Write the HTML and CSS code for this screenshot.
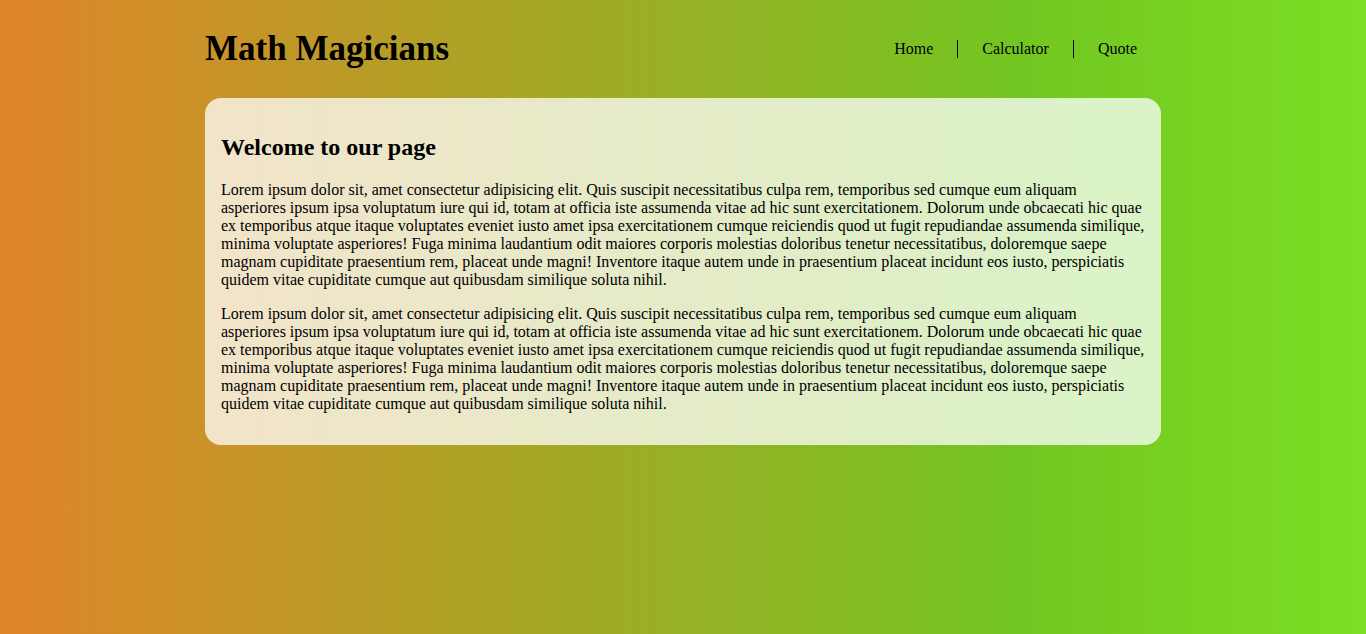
FILE: index.html
```html
<!DOCTYPE html>
<html lang="en">
<head>
<meta charset="utf-8">
<title>Math Magicians</title>
<link rel="stylesheet" href="styles.css">
</head>
<body>
<div class="page">
  <header class="header">
    <h1 class="logo">Math Magicians</h1>
    <nav class="nav">
      <a class="nav-link" href="#">Home</a>
      <a class="nav-link sep" href="#">Calculator</a>
      <a class="nav-link sep" href="#">Quote</a>
    </nav>
  </header>
  <main class="card">
    <h2 class="card-title">Welcome to our page</h2>
    <p class="card-text">Lorem ipsum dolor sit, amet consectetur adipisicing elit. Quis suscipit necessitatibus culpa rem, temporibus sed cumque eum aliquam asperiores ipsum ipsa voluptatum iure qui id, totam at officia iste assumenda vitae ad hic sunt exercitationem. Dolorum unde obcaecati hic quae ex temporibus atque itaque voluptates eveniet iusto amet ipsa exercitationem cumque reiciendis quod ut fugit repudiandae assumenda similique, minima voluptate asperiores! Fuga minima laudantium odit maiores corporis molestias doloribus tenetur necessitatibus, doloremque saepe magnam cupiditate praesentium rem, placeat unde magni! Inventore itaque autem unde in praesentium placeat incidunt eos iusto, perspiciatis quidem vitae cupiditate cumque aut quibusdam similique soluta nihil.</p>
    <p class="card-text">Lorem ipsum dolor sit, amet consectetur adipisicing elit. Quis suscipit necessitatibus culpa rem, temporibus sed cumque eum aliquam asperiores ipsum ipsa voluptatum iure qui id, totam at officia iste assumenda vitae ad hic sunt exercitationem. Dolorum unde obcaecati hic quae ex temporibus atque itaque voluptates eveniet iusto amet ipsa exercitationem cumque reiciendis quod ut fugit repudiandae assumenda similique, minima voluptate asperiores! Fuga minima laudantium odit maiores corporis molestias doloribus tenetur necessitatibus, doloremque saepe magnam cupiditate praesentium rem, placeat unde magni! Inventore itaque autem unde in praesentium placeat incidunt eos iusto, perspiciatis quidem vitae cupiditate cumque aut quibusdam similique soluta nihil.</p>
  </main>
</div>
</body>
</html>
```
FILE: styles.css
```css
html, body {
  margin: 0;
  padding: 0;
}
body {
  min-height: 634px;
  background: linear-gradient(to right, #e0852a 0%, #72c621 75%, #7ddf23 100%);
  font-family: "Liberation Serif", "Times New Roman", serif;
  color: #000;
}
.page {
  width: 956px;
  margin: 0 auto;
}
.header {
  display: flex;
  justify-content: space-between;
  align-items: center;
  padding: 29px 0 29px;
}
.logo {
  margin: 0;
  font-size: 35px;
  font-weight: bold;
}
.nav {
  display: flex;
  align-items: center;
}
.nav-link {
  padding: 0 24px;
  font-size: 16px;
  color: #000;
  text-decoration: none;
}
.nav-link.sep {
  border-left: 1px solid #000;
}
.card {
  background: rgba(255, 255, 255, 0.75);
  border-radius: 16px;
  padding: 16px;
}
.card-title {
  margin: 20px 0;
  font-size: 24px;
  font-weight: bold;
}
.card-text {
  margin: 16px 0;
  font-size: 16px;
}
```
